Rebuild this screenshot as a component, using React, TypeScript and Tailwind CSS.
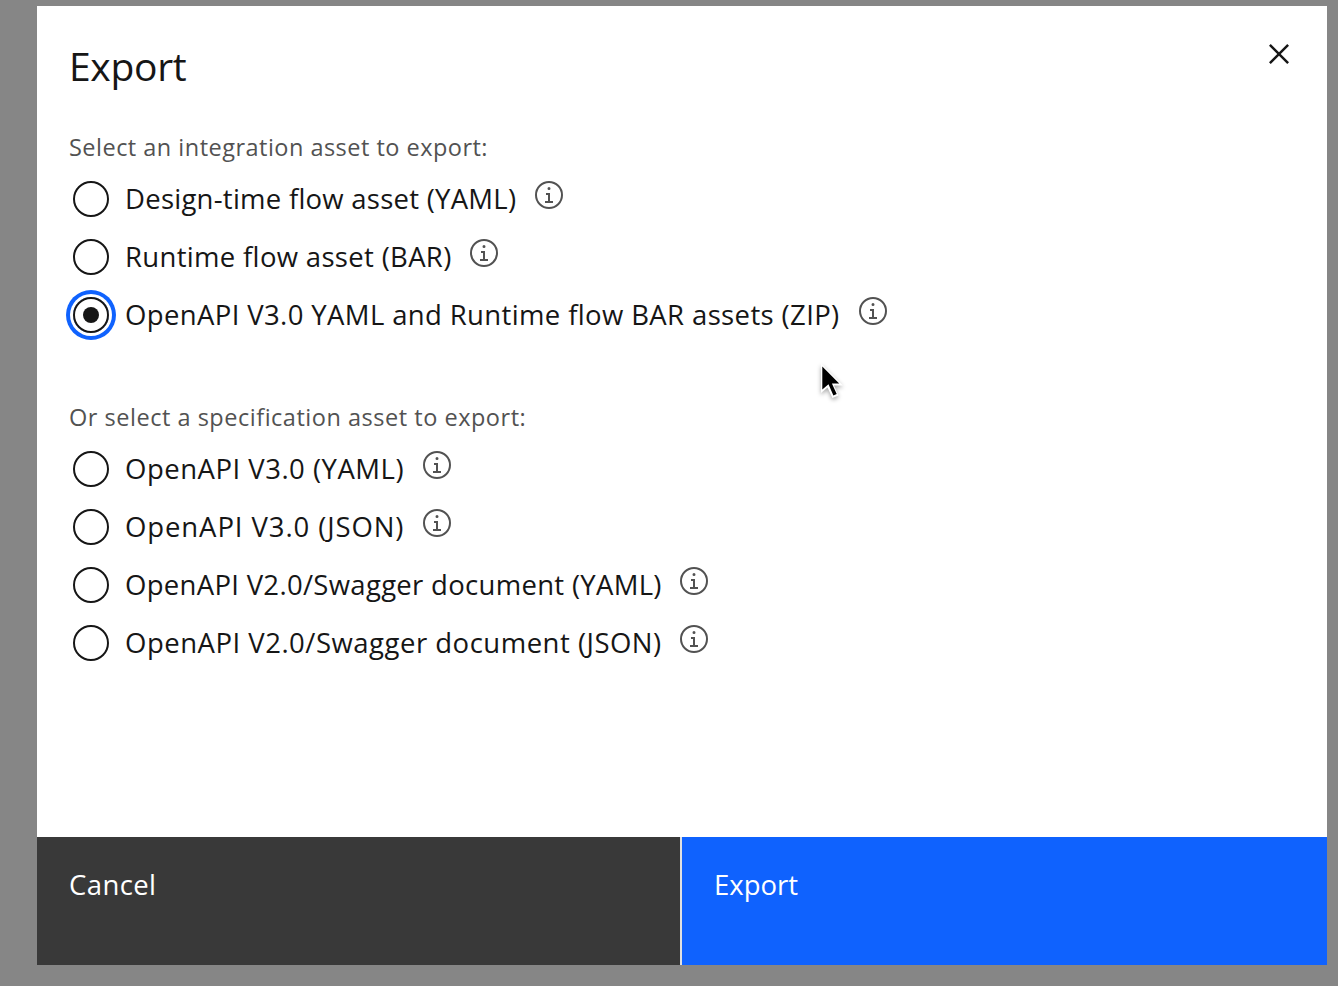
import React, { useState } from 'react';

type Option = { id: string; label: string; box: string };

const integrationAssets: Option[] = [
  { id: 'flow-yaml', label: 'Design-time flow asset (YAML)', box: 'w-[408px] tracking-[0.25px]' },
  { id: 'flow-bar', label: 'Runtime flow asset (BAR)', box: 'w-[343px] tracking-[0.32px]' },
  { id: 'zip', label: 'OpenAPI V3.0 YAML and Runtime flow BAR assets (ZIP)', box: 'w-[732px] tracking-[0.37px]' },
];

const specificationAssets: Option[] = [
  { id: 'v3-yaml', label: 'OpenAPI V3.0 (YAML)', box: 'w-[296px] tracking-[0.5px]' },
  { id: 'v3-json', label: 'OpenAPI V3.0 (JSON)', box: 'w-[296px] tracking-[0.9px]' },
  { id: 'v2-yaml', label: 'OpenAPI V2.0/Swagger document (YAML)', box: 'w-[553px] tracking-[0.3px]' },
  { id: 'v2-json', label: 'OpenAPI V2.0/Swagger document (JSON)', box: 'w-[553px] tracking-[0.5px]' },
];

function InfoIcon() {
  return (
    <svg className="mb-2 size-8 shrink-0 fill-[#525252]" viewBox="0 0 32 32" aria-hidden="true">
      <path d="M17 22L17 14 13 14 13 16 15 16 15 22 12 22 12 24 20 24 20 22 17 22zM16 8a1.5 1.5 0 1 0 1.5 1.5A1.5 1.5 0 0 0 16 8z" />
      <path d="M16,30A14,14,0,1,1,30,16,14,14,0,0,1,16,30ZM16,4A12,12,0,1,0,28,16,12,12,0,0,0,16,4Z" />
    </svg>
  );
}

function OptionRow({ option, checked, onSelect }: { option: Option; checked: boolean; onSelect: () => void }) {
  return (
    <div className="flex h-[58px] items-center">
      <button
        type="button"
        role="radio"
        aria-checked={checked}
        onClick={onSelect}
        className={
          'mr-4 flex size-9 shrink-0 items-center justify-center rounded-full border-2 border-[#161616] outline-none' +
          (checked ? ' shadow-[0_0_0_3px_#ffffff,0_0_0_7px_#0f62fe]' : '')
        }
      >
        {checked && <span className="size-4 rounded-full bg-[#161616]" />}
      </button>
      <span className={'shrink-0 pb-px text-[27.5px] leading-9 whitespace-nowrap text-[#161616] ' + option.box}>
        {option.label}
      </span>
      <InfoIcon />
    </div>
  );
}

export default function App() {
  const [selected, setSelected] = useState('zip');
  const renderRow = (option: Option) => (
    <OptionRow key={option.id} option={option} checked={selected === option.id} onSelect={() => setSelected(option.id)} />
  );

  return (
    <div className="relative h-[986px] w-[1338px] overflow-hidden bg-[#868686] pt-1.5 pl-[37px] font-['Open_Sans',sans-serif]">
      <div role="dialog" className="flex h-[959px] w-[1290px] flex-col bg-white">
        <header className="flex h-[122px] justify-between pl-8">
          <h1 className="mt-9 text-[39px] leading-[48px] tracking-[-0.3px] text-[#161616]">Export</h1>
          <button type="button" aria-label="Close" className="mt-7 mr-7 size-10">
            <svg className="size-10 fill-[#161616]" viewBox="0 0 32 32" aria-hidden="true">
              <path d="M24 9.4L22.6 8 16 14.6 9.4 8 8 9.4 14.6 16 8 22.6 9.4 24 16 17.4 22.6 24 24 22.6 17.4 16 24 9.4z" />
            </svg>
          </button>
        </header>

        <main className="grow">
          <section role="radiogroup" className="h-[270px]">
            <p className="h-[42px] pl-8 text-[23.5px] leading-[38px] tracking-[0.48px] text-[#525252]">
              Select an integration asset to export:
            </p>
            <div className="pl-9">{integrationAssets.map(renderRow)}</div>
          </section>
          <section role="radiogroup">
            <p className="h-[42px] pl-8 text-[23.5px] leading-[38px] tracking-[0.52px] text-[#525252]">
              Or select a specification asset to export:
            </p>
            <div className="pl-9">{specificationAssets.map(renderRow)}</div>
          </section>
        </main>

        <footer className="flex h-32 gap-0.5 bg-[#e0e0e0] text-[27.5px] leading-9 text-white">
          <button type="button" className="flex w-[643px] items-start bg-[#393939] pt-[30px] pl-8 tracking-[0.4px]">
            Cancel
          </button>
          <button type="button" className="flex grow items-start bg-[#0f62fe] pt-[30px] pl-8">
            Export
          </button>
        </footer>
      </div>

      <svg
        className="pointer-events-none absolute top-[360px] left-[816px] drop-shadow-[0_2px_2px_rgba(0,0,0,0.35)]"
        width="32"
        height="42"
        viewBox="0 0 32 42"
        aria-hidden="true"
      >
        <path d="M5 3.5V33L11.5 27.5L16.4 38L22.6 35.4L18 25.4H27Z" fill="#ffffff" />
        <path d="M6.3 6.6V29.5L12.5 24.2L17.4 35.6L20.7 34L15.9 23.4H23.2Z" fill="#000000" />
      </svg>
    </div>
  );
}
